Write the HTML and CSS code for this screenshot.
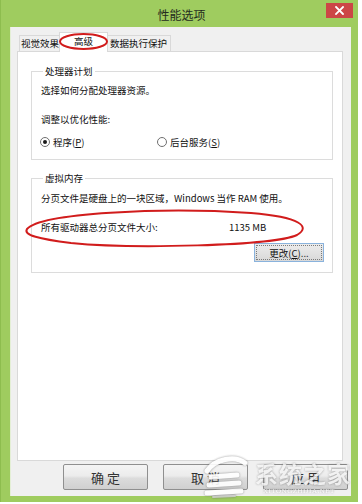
FILE: index.html
```html
<!DOCTYPE html>
<html lang="zh-CN">
<head>
<meta charset="utf-8">
<title>性能选项</title>
<link rel="stylesheet" href="styles.css">
</head>
<body>
<div class="window">
  <div class="titlebar">
    <span class="spacer"></span>
    <span class="title">性能选项</span>
    <span class="close-cell">
      <span class="close">
        <svg width="9" height="9" viewBox="0 0 9 9"><path d="M1 1 L8 8 M8 1 L1 8" stroke="#fff" stroke-width="1.8" stroke-linecap="square"/></svg>
      </span>
    </span>
  </div>
  <div class="client">
    <div class="tabs">
      <div class="tab t1">视觉效果</div>
      <div class="tab t2 active">高级</div>
      <div class="tab t3">数据执行保护</div>
    </div>
    <div class="panel">
      <fieldset class="group g1">
        <legend>处理器计划</legend>
        <p class="line l1">选择如何分配处理器资源。</p>
        <p class="line l2">调整以优化性能:</p>
        <div class="radios">
          <span class="radio"><span class="dot on"></span>程序(<u>P</u>)</span>
          <span class="radio"><span class="dot"></span>后台服务(<u>S</u>)</span>
        </div>
      </fieldset>
      <fieldset class="group g2">
        <legend>虚拟内存</legend>
        <p class="line l3">分页文件是硬盘上的一块区域，Windows 当作 RAM 使用。</p>
        <div class="size-row"><span>所有驱动器总分页文件大小:</span><span>1135 MB</span></div>
        <div class="change-row"><span class="btn-change">更改(<u>C</u>)...</span></div>
      </fieldset>
    </div>
    <div class="buttons">
      <span class="btn">确定</span>
      <span class="btn">取消</span>
      <span class="btn">应用</span>
    </div>
    <svg class="marks" width="341" height="469" viewBox="0 0 341 469">
      <ellipse cx="72.5" cy="14.5" rx="23.5" ry="7.5" fill="none" stroke="#d11c1c" stroke-width="2"/>
      <path d="M16 202 C 30 186, 150 180, 240 186 C 290 190, 300 200, 286 208 C 262 219, 120 222, 60 216 C 28 212, 12 208, 16 202 Z" fill="none" stroke="#d11c1c" stroke-width="2"/>
    </svg>
    <div class="watermark">
      <svg class="wm-logo" width="50" height="48" viewBox="0 0 50 48">
        <path d="M6 18 C 14 6, 34 2, 44 10" fill="none" stroke="#fff" stroke-width="5" stroke-linecap="round"/>
        <path d="M10 24 L36 22" stroke="#fff" stroke-width="5" stroke-linecap="round"/>
        <path d="M8 32 L38 30" stroke="#fff" stroke-width="5" stroke-linecap="round"/>
        <path d="M6 40 L40 38" stroke="#fff" stroke-width="5" stroke-linecap="round"/>
        <path d="M12 44 L34 43" stroke="#ccc" stroke-width="2" stroke-linecap="round"/>
      </svg>
      <div class="wm-text">
        <span class="wm-cn">系统之家</span>
        <span class="wm-en">XITONGZHIJIA.NET</span>
      </div>
    </div>
  </div>
</div>
</body>
</html>
```
FILE: styles.css
```css
* { box-sizing: border-box; }
html, body { margin: 0; padding: 0; background: #ffffff; }
body {
  font-family: "Noto Sans CJK SC", "Noto Sans", sans-serif;
  color: #111111;
}
.window {
  width: 358px;
  height: 502px;
  background: #9fcc5f;
  border-left: 1px solid #8dbd4e;
  display: flex;
  flex-direction: column;
}
.titlebar {
  height: 27px;
  flex: none;
  display: grid;
  grid-template-columns: 1fr auto 1fr;
  align-items: start;
}
.title {
  margin-top: 8px;
  font-size: 12px;
  line-height: 14px;
  color: #242b1e;
  padding-left: 4px;
}
.close-cell { display: flex; justify-content: flex-end; padding-right: 5px; }
.close {
  margin-top: 3px;
  width: 27px;
  height: 15px;
  background: #cc4646;
  display: flex;
  align-items: center;
  justify-content: center;
}
.client {
  position: relative;
  flex: 1;
  margin: 0 7px 6px 9px;
  background: #f0f0f0;
  border-left: 1px solid #e4efd6;
  display: flex;
  flex-direction: column;
  font-size: 9.5px;
}
.tabs {
  margin: 5px 0 0 8px;
  height: 19px;
  display: flex;
  align-items: flex-end;
}
.tab {
  height: 16px;
  border: 1px solid #d9d9d9;
  border-bottom: none;
  background: #f0f0f0;
  font-size: 9.5px;
  line-height: 14px;
  text-align: center;
  white-space: nowrap;
}
.t1 { width: 42px; }
.t2 { width: 49px; margin: 0 -1px 0 -2px; }
.t3 { width: 64px; border-left: none; }
.tab.active {
  position: relative;
  z-index: 1;
  height: 20px;
  margin-bottom: -1px;
  background: #ffffff;
  line-height: 17px;
}
.panel {
  margin: 0 8px 0 6px;
  height: 410px;
  background: #ffffff;
  border: 1px solid #d9d9d9;
  padding: 12px 9px 0 13px;
  flex: none;
}
.group {
  margin: 0;
  padding: 0 8px 10px 9px;
  border: 1px solid #dcdcdc;
  min-width: 0;
}
.group legend {
  padding: 0 2px;
  margin-left: 2px;
  line-height: 14px;
  font-size: 9.5px;
}
.g2 { margin-top: 11px; }
.line { margin: 0; line-height: 14px; white-space: nowrap; }
.l1 { margin-top: 5px; }
.l2 { margin-top: 15px; }
.l3 { margin-top: 6px; }
.radios {
  margin-top: 9px;
  margin-left: -1px;
  display: grid;
  grid-template-columns: 117px auto;
  line-height: 14px;
}
.radio { display: flex; align-items: center; white-space: nowrap; }
.dot {
  width: 10px;
  height: 10px;
  border-radius: 50%;
  border: 1px solid #6f6f6f;
  background: #fff;
  margin-right: 3px;
  display: flex;
  align-items: center;
  justify-content: center;
}
.dot.on::after {
  content: "";
  width: 4px;
  height: 4px;
  border-radius: 50%;
  background: #1a1a1a;
}
.size-row {
  margin-top: 15px;
  display: grid;
  grid-template-columns: 188px auto;
  line-height: 14px;
  white-space: nowrap;
}
.change-row {
  margin-top: 9px;
  display: flex;
  justify-content: flex-end;
}
.btn-change {
  width: 70px;
  height: 19px;
  border: 1px solid #8ab3dd;
  outline: 1px dotted #7a7a7a;
  outline-offset: -3px;
  background: linear-gradient(#ececec, #e2e2e2 50%, #d8d8d8);
  display: flex;
  align-items: center;
  justify-content: center;
  line-height: 14px;
}
.buttons {
  margin-top: 3px;
  padding-left: 52px;
  display: flex;
  gap: 15px;
}
.btn {
  width: 85px;
  height: 26px;
  border: 1px solid #8f8f8f;
  border-radius: 2px;
  background: linear-gradient(#f4f4f4, #ececec 45%, #dcdcdc 55%, #d0d0d0);
  display: flex;
  align-items: center;
  justify-content: center;
  font-size: 13px;
  letter-spacing: 3px;
  padding-left: 3px;
  color: #333;
}
.marks {
  position: absolute;
  z-index: 2;
  left: 0;
  top: 0;
  pointer-events: none;
}
.watermark {
  position: absolute;
  z-index: 3;
  left: 190px;
  top: 426px;
  display: flex;
  align-items: flex-start;
  gap: 4px;
  opacity: 0.9;
  filter: drop-shadow(0 0 1px rgba(90, 90, 90, 0.7));
}
.wm-logo { flex: none; }
.wm-text {
  display: flex;
  flex-direction: column;
  align-items: flex-start;
  margin-top: 6px;
}
.wm-cn {
  font-size: 23px;
  line-height: 28px;
  font-weight: 700;
  color: rgba(255, 255, 255, 0.85);
  letter-spacing: 1px;
}
.wm-en {
  font-family: "Liberation Serif", serif;
  font-size: 7px;
  line-height: 9px;
  color: rgba(255, 255, 255, 0.9);
  letter-spacing: 0.5px;
  margin-left: 8px;
}
```
